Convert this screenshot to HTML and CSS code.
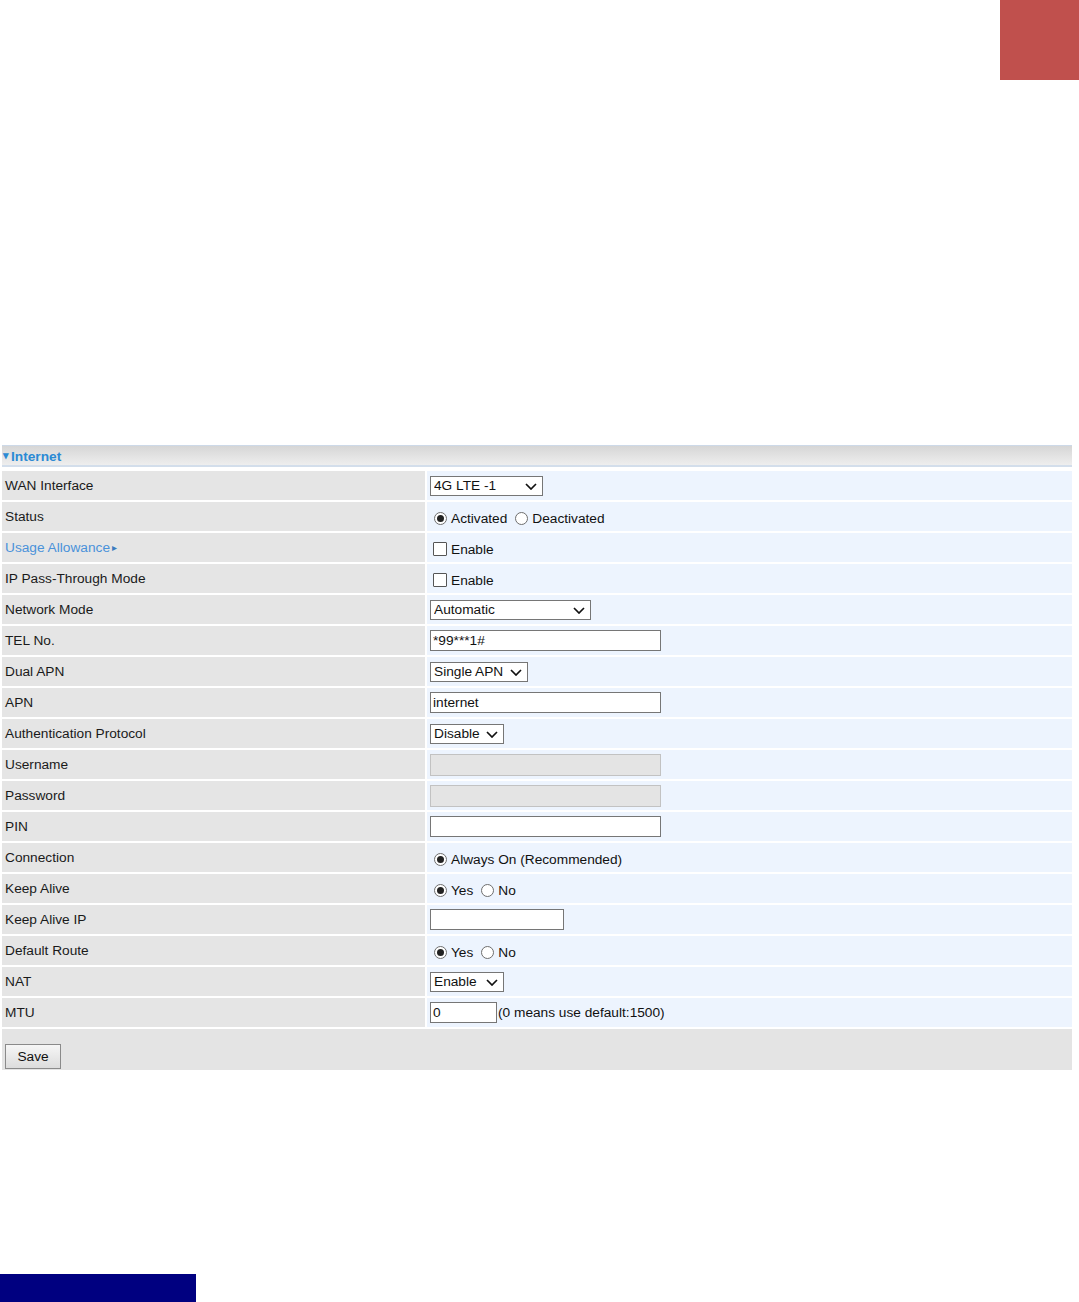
FILE: index.html
```html
<!DOCTYPE html>
<html>
<head>
<meta charset="utf-8">
<link rel="stylesheet" href="styles.css">
</head>
<body>
<div class="top"><div class="redbox"></div></div>

<div class="panel">
  <div class="panel-head"><span class="caret">&#9662;</span>Internet</div>
  <div class="rows">
    <div class="lbl">WAN Interface</div>
    <div class="val"><span class="sel w113"><select><option>4G LTE -1</option></select><svg class="chev" viewBox="0 0 12 7"><path d="M1 1 L6 6 L11 1"/></svg></span></div>

    <div class="lbl">Status</div>
    <div class="val lower"><span class="radio on"></span><span class="opt">Activated</span><span class="radio"></span><span class="opt">Deactivated</span></div>

    <div class="lbl"><span class="link">Usage Allowance</span><span class="tri">&#9656;</span></div>
    <div class="val lower"><span class="check"></span><span class="opt">Enable</span></div>

    <div class="lbl">IP Pass-Through Mode</div>
    <div class="val lower"><span class="check"></span><span class="opt">Enable</span></div>

    <div class="lbl">Network Mode</div>
    <div class="val"><span class="sel w161"><select><option>Automatic</option></select><svg class="chev" viewBox="0 0 12 7"><path d="M1 1 L6 6 L11 1"/></svg></span></div>

    <div class="lbl">TEL No.</div>
    <div class="val"><input class="txt w231" type="text" value="*99***1#"></div>

    <div class="lbl">Dual APN</div>
    <div class="val"><span class="sel w98"><select><option>Single APN</option></select><svg class="chev" viewBox="0 0 12 7"><path d="M1 1 L6 6 L11 1"/></svg></span></div>

    <div class="lbl">APN</div>
    <div class="val"><input class="txt w231" type="text" value="internet"></div>

    <div class="lbl">Authentication Protocol</div>
    <div class="val"><span class="sel w74"><select><option>Disable</option></select><svg class="chev" viewBox="0 0 12 7"><path d="M1 1 L6 6 L11 1"/></svg></span></div>

    <div class="lbl">Username</div>
    <div class="val"><input class="txt w231 dis" type="text" disabled></div>

    <div class="lbl">Password</div>
    <div class="val"><input class="txt w231 dis" type="password" disabled></div>

    <div class="lbl">PIN</div>
    <div class="val"><input class="txt w231" type="text"></div>

    <div class="lbl">Connection</div>
    <div class="val lower"><span class="radio on"></span><span class="opt">Always On (Recommended)</span></div>

    <div class="lbl">Keep Alive</div>
    <div class="val lower"><span class="radio on"></span><span class="opt">Yes</span><span class="radio"></span><span class="opt">No</span></div>

    <div class="lbl">Keep Alive IP</div>
    <div class="val"><input class="txt w134" type="text"></div>

    <div class="lbl">Default Route</div>
    <div class="val lower"><span class="radio on"></span><span class="opt">Yes</span><span class="radio"></span><span class="opt">No</span></div>

    <div class="lbl">NAT</div>
    <div class="val"><span class="sel w74"><select><option>Enable</option></select><svg class="chev" viewBox="0 0 12 7"><path d="M1 1 L6 6 L11 1"/></svg></span></div>

    <div class="lbl">MTU</div>
    <div class="val"><input class="txt w67" type="text" value="0"><span class="note">(0 means use default:1500)</span></div>
  </div>
  <div class="save-area"><button class="btn" type="button">Save</button></div>
</div>

<div class="navy"></div>
</body>
</html>
```

FILE: styles.css
```css
* { box-sizing: border-box; }
html, body { margin: 0; padding: 0; background: #fff; }
body {
  width: 1079px;
  height: 1302px;
  font-family: "Liberation Sans", Arial, sans-serif;
  font-size: 13.7px;
  color: #1a1a1a;
  position: relative;
  overflow: hidden;
}
.top { height: 80px; display: flex; justify-content: flex-end; }
.redbox { width: 79px; height: 80px; background: #c0504d; }

.panel { margin-top: 365px; margin-left: 2px; width: 1070px; }
.panel-head {
  height: 22px;
  border-top: 1px solid #cdd9e8;
  border-bottom: 2px solid #d3deeb;
  background: linear-gradient(#d6d6d6, #eeeeee);
  color: #2b8ad4;
  font-weight: bold;
  font-size: 13.7px;
  line-height: 19px;
  padding-left: 1px;
}
.caret { font-size: 11px; vertical-align: 2px; margin-right: 2px; }

.rows {
  margin-top: 4px;
  display: grid;
  grid-template-columns: 423px 645px;
  column-gap: 2px;
  row-gap: 2px;
  grid-auto-rows: 29px;
}
.lbl {
  background: #e5e5e5;
  display: flex;
  align-items: center;
  padding-left: 3px;
  padding-bottom: 1px;
  color: #1a1a1a;
}
.link { color: #4a92da; }
.tri { color: #3a7cc0; font-size: 10px; margin-left: 2px; }
.val {
  background: #edf4fe;
  display: flex;
  align-items: center;
  padding-left: 3px;
  color: #111;
}
.val.lower { padding-top: 3px; }

.radio {
  width: 13px; height: 13px;
  border: 1px solid #6e6e6e;
  border-radius: 50%;
  background: #fff;
  margin: 0 4px 0 4px;
  display: inline-flex;
  align-items: center;
  justify-content: center;
}
.radio.on::after {
  content: "";
  width: 7px; height: 7px;
  border-radius: 50%;
  background: #222;
}
.opt + .radio { margin-left: 8px; }
.check {
  width: 14px; height: 14px;
  border: 1px solid #555;
  background: #fff;
  margin: 0 4px 0 3px;
  border-radius: 1px;
}

.sel { position: relative; display: inline-block; height: 20px; }
.sel select {
  appearance: none;
  -webkit-appearance: none;
  width: 100%;
  height: 20px;
  border: 1px solid #767676;
  border-radius: 0;
  background: #fff;
  font-family: "Liberation Sans", Arial, sans-serif;
  font-size: 13.7px;
  color: #111;
  padding: 0 0 0 3px;
  margin: 0;
  line-height: 18px;
}
.chev {
  position: absolute;
  right: 6px; top: 7px;
  width: 12px; height: 7px;
  fill: none;
  stroke: #111;
  stroke-width: 1.7;
}
.w113 { width: 113px; }
.w161 { width: 161px; }
.w98 { width: 98px; }
.w74 { width: 74px; }

.txt {
  height: 21px;
  border: 1px solid #767676;
  border-radius: 0;
  background: #fff;
  font-family: "Liberation Sans", Arial, sans-serif;
  font-size: 13.7px;
  color: #111;
  padding: 0 2px;
  margin: 0;
  outline: none;
}
.txt.dis { background: #e4e4e4; border-color: #c2c2c2; height: 22px; }
.w231 { width: 231px; }
.w134 { width: 134px; }
.w67 { width: 67px; }
.note { margin-left: 1px; }

.save-area {
  margin-top: 2px;
  height: 41px;
  background: #e4e4e4;
  padding: 15px 0 0 3px;
}
.btn {
  width: 56px; height: 25px;
  border: 1px solid #8a8a8a;
  border-radius: 0;
  background: linear-gradient(#f6f6f6, #dcdcdc);
  font-family: "Liberation Sans", Arial, sans-serif;
  font-size: 13.7px;
  color: #111;
  padding: 0;
  margin: 0;
  display: block;
}

.navy {
  position: absolute;
  left: 0; bottom: 0;
  width: 196px; height: 28px;
  background: #000080;
}
```
